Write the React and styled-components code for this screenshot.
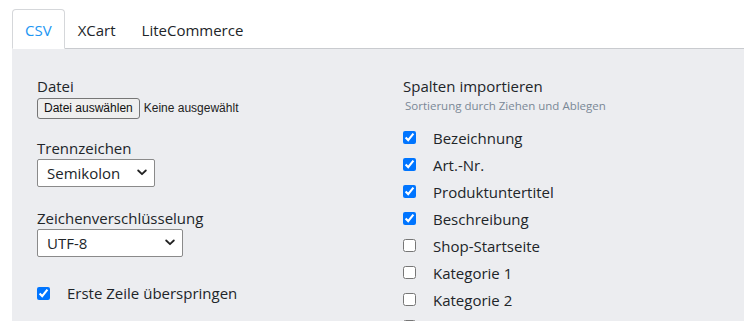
import React, { useState } from 'react'
import styled, { createGlobalStyle } from 'styled-components'

const GlobalStyle = createGlobalStyle`
  html, body {
    margin: 0;
    padding: 0;
    background: #ffffff;
    font-family: "Open Sans", "Noto Sans", sans-serif;
    color: #212529;
  }
`

const columns = [
  { name: 'Bezeichnung', checked: true },
  { name: 'Art.-Nr.', checked: true },
  { name: 'Produktuntertitel', checked: true },
  { name: 'Beschreibung', checked: true },
  { name: 'Shop-Startseite', checked: false },
  { name: 'Kategorie 1', checked: false },
  { name: 'Kategorie 2', checked: false },
  { name: 'Kategorie 3', checked: false },
]

const Chevron = () => (
  <svg width="10" height="7" viewBox="0 0 10 7">
    <path d="M1.2 1.5 L5 5.2 L8.8 1.5" fill="none" stroke="#222" strokeWidth="1.8" strokeLinecap="round" strokeLinejoin="round" />
  </svg>
)

const App = () => {
  const [tab, setTab] = useState('CSV')
  const [cols, setCols] = useState(columns)
  const [skipFirst, setSkipFirst] = useState(true)

  const toggle = (i) => {
    setCols(cols.map((c, idx) => idx === i ? { ...c, checked: !c.checked } : c))
  }

  return (
    <>
      <GlobalStyle />
      <Page>
        <TabBar>
          {['CSV', 'XCart', 'LiteCommerce'].map((t) => (
            <Tab key={t} $active={tab === t} onClick={() => setTab(t)}>{t}</Tab>
          ))}
        </TabBar>
        <Panel>
          <Column>
            <Field $mb={18}>
              <Label>Datei</Label>
              <FileRow>
                <FileButton type="button">Datei auswählen</FileButton>
                <FileName>Keine ausgewählt</FileName>
              </FileRow>
            </Field>
            <Field $mb={20}>
              <Label>Trennzeichen</Label>
              <SelectWrap $width={118}>
                <Select defaultValue="Semikolon">
                  <option>Semikolon</option>
                  <option>Komma</option>
                  <option>Tabulator</option>
                </Select>
                <Arrow><Chevron /></Arrow>
              </SelectWrap>
            </Field>
            <Field $mb={24}>
              <Label>Zeichenverschlüsselung</Label>
              <SelectWrap $width={146}>
                <Select defaultValue="UTF-8">
                  <option>UTF-8</option>
                  <option>ISO-8859-1</option>
                </Select>
                <Arrow><Chevron /></Arrow>
              </SelectWrap>
            </Field>
            <CheckRow $height={24}>
              <Check type="checkbox" checked={skipFirst} onChange={() => setSkipFirst(!skipFirst)} />
              <CheckText>Erste Zeile überspringen</CheckText>
            </CheckRow>
          </Column>
          <Column>
            <Label>Spalten importieren</Label>
            <Hint>Sortierung durch Ziehen und Ablegen</Hint>
            <List>
              {cols.map((c, i) => (
                <CheckRow key={c.name} $height={27}>
                  <Check type="checkbox" checked={c.checked} onChange={() => toggle(i)} />
                  <CheckText>{c.name}</CheckText>
                </CheckRow>
              ))}
            </List>
          </Column>
        </Panel>
      </Page>
    </>
  )
}

const Page = styled.div`
  padding: 9px 10px 0 12px;
  height: 321px;
  box-sizing: border-box;
  display: flex;
  flex-direction: column;
  overflow: hidden;
`

const TabBar = styled.div`
  display: flex;
  border-bottom: 1px solid #c9cbcf;
`

const Tab = styled.div`
  height: 40px;
  line-height: 40px;
  padding: 0 12px;
  font-size: 15px;
  cursor: pointer;
  box-sizing: border-box;
  margin-bottom: -1px;
  color: ${p => p.$active ? '#2196f3' : '#212529'};
  background: ${p => p.$active ? '#ffffff' : 'transparent'};
  border: 1px solid ${p => p.$active ? '#d5d7da' : 'transparent'};
  border-bottom: 1px solid ${p => p.$active ? '#ffffff' : 'transparent'};
  border-radius: 4px 4px 0 0;
`

const Panel = styled.div`
  flex: 1;
  background: #ecedf0;
  padding: 26px 25px 0 25px;
  display: grid;
  grid-template-columns: 1fr 1fr;
  column-gap: 50px;
`

const Column = styled.div`
  display: flex;
  flex-direction: column;
`

const Field = styled.div`
  display: flex;
  flex-direction: column;
  margin-bottom: ${p => p.$mb}px;
`

const Label = styled.div`
  font-size: 15px;
  line-height: 22px;
  color: #212529;
`

const FileRow = styled.div`
  display: flex;
  align-items: center;
  height: 22px;
  gap: 4px;
`

const FileButton = styled.button`
  font-family: "Liberation Sans", Arial, sans-serif;
  font-size: 12px;
  height: 21px;
  padding: 0 6px;
  background: #efefef;
  border: 1px solid #767676;
  border-radius: 3px;
  color: #111;
`

const FileName = styled.span`
  font-family: "Liberation Sans", Arial, sans-serif;
  font-size: 12px;
  color: #222;
`

const SelectWrap = styled.div`
  position: relative;
  width: ${p => p.$width}px;
  height: 28px;
`

const Select = styled.select`
  appearance: none;
  width: 100%;
  height: 28px;
  box-sizing: border-box;
  padding: 0 24px 0 9px;
  font-family: "Open Sans", "Noto Sans", sans-serif;
  font-size: 15px;
  color: #212529;
  background: #ffffff;
  border: 1px solid #8a8a8a;
  border-radius: 2px;
  outline: none;
`

const Arrow = styled.span`
  position: absolute;
  right: 8px;
  top: 10px;
  display: flex;
  pointer-events: none;
`

const Hint = styled.div`
  font-size: 11.5px;
  line-height: 16px;
  color: #7a8896;
  padding-left: 2px;
  margin-top: 1px;
  margin-bottom: 10px;
`

const List = styled.div`
  display: flex;
  flex-direction: column;
`

const CheckRow = styled.label`
  display: flex;
  align-items: center;
  height: ${p => p.$height}px;
  gap: 17px;
  cursor: pointer;
`

const Check = styled.input`
  width: 13px;
  height: 13px;
  margin: 0;
  accent-color: #0075ff;
  flex: none;
`

const CheckText = styled.span`
  font-size: 15px;
  color: #212529;
`

export default App
